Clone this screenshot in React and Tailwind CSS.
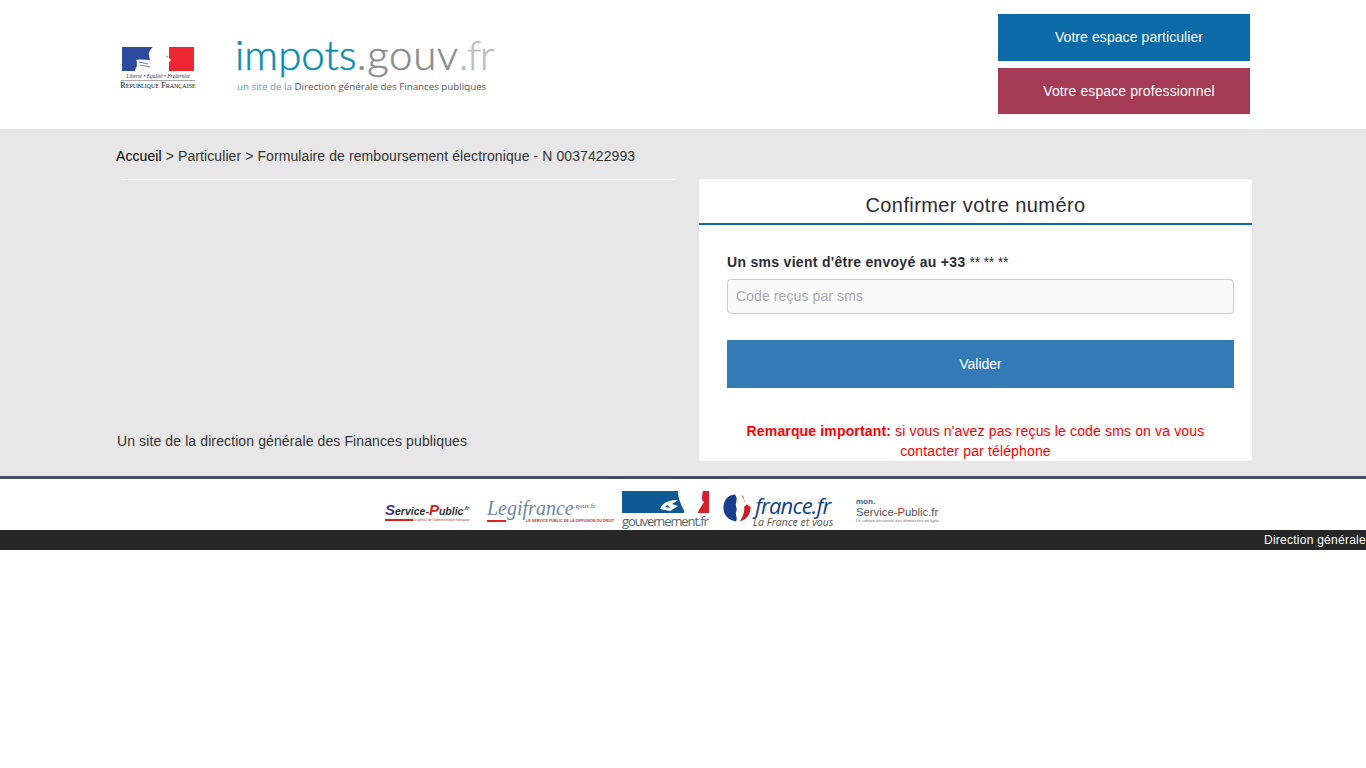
const sans = "font-['Liberation_Sans',Arial,sans-serif]";

const Marianne = () => (
  <div className="w-[74px] flex flex-col items-center">
    <svg width="72" height="24" viewBox="0 0 72 24" className="block">
      <rect width="31" height="24" fill="#2d4a9e" />
      <rect x="31" width="17" height="24" fill="#fff" />
      <rect x="47" width="25" height="24" fill="#ee2631" />
      <path d="M31 0 C28 3 26 6 27 8 C27 10 28 12 28 13 C23 13 18 12 14 13 C16 15 14 17 15 19 C14 21 13 22 13 24 L41 24 C42 22 45 20 46 18 C47 16 47 15 49 13 L47 11 C47 8 46 4 47 0 Z" fill="#fff" />
      <path d="M17 15 L26 17 M18 18 L28 20" stroke="#2d4a9e" strokeWidth="0.7" fill="none" />
      <path d="M44 9 L46 10" stroke="#8a8a8a" strokeWidth="1" fill="none" />
    </svg>
    <div className="font-['Liberation_Serif',serif] italic text-[5.5px] leading-[8px] text-[#333] mt-[1px] border-b border-[#aaa] whitespace-nowrap w-full text-center">
      Liberté • Égalité • Fraternité
    </div>
    <div className="font-['Liberation_Serif',serif] [font-variant-caps:small-caps] text-[8.2px] leading-[9px] text-[#111] whitespace-nowrap">
      République Française
    </div>
  </div>
);

const ImpotsLogo = () => (
  <div className="flex flex-col ml-[40px] pt-[29px]">
    <div className="font-['Lato',sans-serif] font-light text-[42px] leading-[50px] whitespace-nowrap">
      <span className="text-[#0d8bb1] [-webkit-text-stroke:0.5px_#0d8bb1]">impots</span>
      <span className="text-[#8c8c8c] tracking-[0.7px] [-webkit-text-stroke:0.5px_#8c8c8c]">.gouv</span>
      <span className="text-[#bcbcbc] tracking-[-1.5px] [-webkit-text-stroke:0.3px_#bcbcbc]">.fr</span>
    </div>
    <div className="font-['Open_Sans',sans-serif] text-[9.75px] leading-[14px] mt-[1px] ml-[2px] text-[#555] whitespace-nowrap">
      <span className="text-[#5b9cc4]">un site de la</span> Direction générale des Finances publiques
    </div>
  </div>
);

const Header = () => (
  <header className={`bg-white h-[129px] flex pl-[121px] pr-[116px] justify-between ${sans}`}>
    <div className="flex items-start">
      <div className="pt-[47px]">
        <Marianne />
      </div>
      <ImpotsLogo />
    </div>
    <div className="flex flex-col pt-[14px] gap-[7px]">
      <a href="#" className="w-[252px] h-[47px] bg-[#0d6aa8] text-white text-[14px] tracking-[0.08px] flex items-center justify-center pl-[10px]">
        Votre espace particulier
      </a>
      <a href="#" className="w-[252px] h-[46px] bg-[#a53a54] text-white text-[14px] tracking-[0.1px] flex items-center justify-center pl-[10px]">
        Votre espace professionnel
      </a>
    </div>
  </header>
);

const Card = () => (
  <div className="w-[553px] h-[282px] bg-white rounded-[4px] ml-[24px]">
    <div className="h-[46px] border-b-2 border-[#0d6aa8] text-[20px] tracking-[0.4px] leading-[52px] text-[#2b2b33] text-center">
      Confirmer votre numéro
    </div>
    <div className="pl-[28px] pr-[18px]">
      <div className="text-[14px] leading-[20px] mt-[27px] text-[#2b2b33]">
        <b className="tracking-[0.3px]">Un sms vient d'être envoyé au +33</b> <span className="tracking-[-0.2px]">** ** **</span>
      </div>
      <input
        placeholder="Code reçus par sms"
        className="block w-full h-[35px] mt-[7px] px-[8px] pb-[2px] bg-[#fafafa] border border-[#ccc] rounded-[4px] text-[14px] tracking-[0.1px] placeholder:text-[#aaa]"
      />
      <button className="block w-full h-[48px] mt-[26px] bg-[#337ab7] text-white text-[14px]">Valider</button>
      <p className="text-[14px] tracking-[0.15px] leading-[20px] text-[#f00] text-center mt-[33px] pr-[10px]">
        <b>Remarque important:</b> si vous n'avez pas reçus le code sms on va vous contacter par téléphone
      </p>
    </div>
  </div>
);

const Main = () => (
  <main className={`bg-[#e7e7e7] h-[347px] pl-[116px] ${sans}`}>
    <div className="h-[50px] pt-[17px] text-[14px] tracking-[0.09px] leading-[20px] text-[#333]">
      <a href="#" className="text-black">Accueil</a> &gt; Particulier &gt; Formulaire de remboursement électronique - N 0037422993
    </div>
    <div className="flex">
      <div className="w-[559px] flex flex-col justify-between pb-[10px]">
        <div className="ml-[6px] border-t border-white" />
        <p className="ml-[1px] text-[14px] tracking-[0.11px] leading-[20px] text-[#333]">Un site de la direction générale des Finances publiques</p>
      </div>
      <Card />
    </div>
  </main>
);

const ServicePublicLogo = () => (
  <div className="w-[85px] mt-[21px] flex flex-col items-start">
    <div className="font-['Liberation_Sans',sans-serif] font-bold italic text-[10.5px] leading-[16px] whitespace-nowrap text-[#333]">
      <span className="text-[#3b3b9e] text-[15px]">S</span>ervice-<span className="text-[#c8281e] text-[15px]">P</span>ublic<span className="text-[6px] align-[5px]">.fr</span>
    </div>
    <div className="h-[2px] w-[28px] bg-[#d22]" />
    <div className="text-[3.4px] leading-[3px] ml-[28px] -mt-[2px] text-[#a33] whitespace-nowrap">Le portail de l'administration française</div>
  </div>
);

const LegifranceLogo = () => (
  <div className="w-[128px] mt-[17px] flex flex-col items-start">
    <div className="font-['Liberation_Serif',serif] italic text-[20px] leading-[20px] text-[#6f86a8] whitespace-nowrap">
      Legifrance<span className="text-[7px] text-[#555] not-italic align-[7px]">.gouv.fr</span>
    </div>
    <div className="flex items-center mt-[1px]">
      <div className="h-[2px] w-[19px] bg-[#d22]" />
      <div className="text-[3.7px] leading-[4px] ml-[20px] text-[#b33] whitespace-nowrap font-bold">LE SERVICE PUBLIC DE LA DIFFUSION DU DROIT</div>
    </div>
  </div>
);

const GouvernementLogo = () => (
  <div className="w-[87px] mt-[12px] flex flex-col">
    <svg width="87" height="22" viewBox="0 0 87 22" className="block">
      <rect width="87" height="22" fill="#0e5a94" />
      <path d="M56 0 L87 0 L87 22 L62 22 C64 20 56 12 56 0 Z" fill="#fff" />
      <path d="M81 0 L87 0 L87 22 L76 22 C76 19 79 17 80 14 L82 11 L80 9 C80 6 80 3 81 0 Z" fill="#d8202c" />
      <path d="M38 18 C41 11 47 9 56 9 L50 13 L56 15 L48 20 Z M43 16 L49 17 L45 14 Z" fill="#fff" fillRule="evenodd" />
    </svg>
    <div className="font-['Open_Sans',sans-serif] text-[13px] leading-[14px] mt-[1px] tracking-[-1.1px] text-[#566] whitespace-nowrap">gouvernement.fr</div>
  </div>
);

const FranceLogo = () => (
  <div className="w-[111px] mt-[15px] flex items-start">
    <svg width="28" height="28" viewBox="0 0 28 28" className="block shrink-0">
      <circle cx="14" cy="14" r="13.5" fill="#fff" />
      <path d="M12 0.5 C4 1 0.5 7 0.5 14 C0.5 21 5 26 13 27.5 C15 24 12 21 13 18 C15 15 12 12 13 9 C14 6 14 3 12 0.5 Z" fill="#173f8a" />
      <path d="M18 1 C20 3 21 5 21 7 L24 10 L21 13 C22 17 20 22 17 27 C23 26 27.5 21 27.5 14 C27.5 8 23 3 18 1 Z" fill="#c9202c" />
      <path d="M20 1 C25 4 27.5 8 27.5 13 L22 9 Z" fill="#fff" />
    </svg>
    <div className="flex flex-col ml-[4px]">
      <div className="font-['Open_Sans',sans-serif] italic font-medium text-[22px] leading-[23px] tracking-[-0.8px] text-[#123f85] whitespace-nowrap">france.fr</div>
      <div className="font-['Open_Sans',sans-serif] italic text-[10.5px] leading-[11px] text-[#555] -ml-[2px] whitespace-nowrap">La France et vous</div>
    </div>
  </div>
);

const MonServiceLogo = () => (
  <div className={`w-[86px] mt-[19px] flex flex-col ${sans}`}>
    <div className="text-[8px] leading-[8px] text-[#3d5a92] font-bold">mon.</div>
    <div className="text-[11.3px] leading-[12px] text-[#555] whitespace-nowrap">
      <span className="text-[#3d5a92]">S</span>ervice-<span className="text-[#c8281e]">P</span>ublic.fr
    </div>
    <div className="text-[4.1px] leading-[5px] text-[#777] whitespace-nowrap">Le compte personnel des démarches en ligne</div>
  </div>
);

const Footer = () => (
  <footer className={sans}>
    <div className="h-[54px] border-t-[3px] border-[#474a5e] bg-white flex items-start pl-[385px]">
      <ServicePublicLogo />
      <div className="ml-[17px]"><LegifranceLogo /></div>
      <div className="ml-[7px]"><GouvernementLogo /></div>
      <div className="ml-[14px]"><FranceLogo /></div>
      <div className="ml-[22px]"><MonServiceLogo /></div>
    </div>
    <div className="h-[20px] bg-[#262626] text-white text-[12px] tracking-[0.25px] leading-[20px] overflow-hidden whitespace-nowrap pl-[1264px]">
      Direction générale des Finances publiques
    </div>
  </footer>
);

export default function App() {
  return (
    <div className="min-h-[768px] bg-white overflow-hidden">
      <Header />
      <Main />
      <Footer />
    </div>
  );
}
